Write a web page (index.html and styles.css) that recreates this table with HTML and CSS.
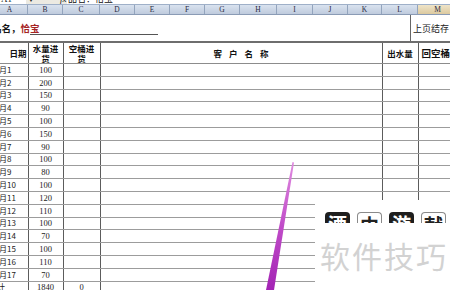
FILE: index.html
```html
<!DOCTYPE html>
<html lang="zh">
<head>
<meta charset="utf-8">
<title>水量登记表</title>
<link rel="stylesheet" href="styles.css">
</head>
<body>
<div class="screen">
  <div class="fbar">
    <span class="namebox">A1</span>
    <span class="arrow">▼</span>
    <span class="fx">fx</span>
    <span class="ftext">品名：恰宝</span>
  </div>
  <div class="colhead">
    <span>A</span><span>B</span><span>C</span><span>D</span><span>E</span><span>F</span><span>G</span><span>H</span><span>I</span><span>J</span><span>K</span><span>L</span><span class="sel">M</span>
  </div>
  <div class="row1">
    <div class="title"><span class="lbl">品名，</span><span class="val">恰宝</span><span class="line"></span></div>
    <div class="carry">上页结存</div>
  </div>
  <table class="sheet">
    <colgroup>
      <col class="c-a"><col class="c-b"><col class="c-c"><col class="c-d"><col class="c-l"><col class="c-m">
    </colgroup>
    <thead>
      <tr>
        <th class="date">日期</th>
        <th>水量进<br>货</th>
        <th>空桶进<br>货</th>
        <th class="cust">客户名称</th>
        <th>出水量</th>
        <th class="back">回空桶</th>
      </tr>
    </thead>
    <tbody>
      <tr><td class="m">月1</td><td>100</td><td></td><td></td><td></td><td></td></tr>
      <tr><td class="m">月2</td><td>200</td><td></td><td></td><td></td><td></td></tr>
      <tr><td class="m">月3</td><td>150</td><td></td><td></td><td></td><td></td></tr>
      <tr><td class="m">月4</td><td>90</td><td></td><td></td><td></td><td></td></tr>
      <tr><td class="m">月5</td><td>100</td><td></td><td></td><td></td><td></td></tr>
      <tr><td class="m">月6</td><td>150</td><td></td><td></td><td></td><td></td></tr>
      <tr><td class="m">月7</td><td>90</td><td></td><td></td><td></td><td></td></tr>
      <tr><td class="m">月8</td><td>100</td><td></td><td></td><td></td><td></td></tr>
      <tr><td class="m">月9</td><td>80</td><td></td><td></td><td></td><td></td></tr>
      <tr><td class="m">月10</td><td>100</td><td></td><td></td><td></td><td></td></tr>
      <tr><td class="m">月11</td><td>120</td><td></td><td></td><td></td><td></td></tr>
      <tr><td class="m">月12</td><td>110</td><td></td><td></td><td></td><td></td></tr>
      <tr><td class="m">月13</td><td>100</td><td></td><td></td><td></td><td></td></tr>
      <tr><td class="m">月14</td><td>70</td><td></td><td></td><td></td><td></td></tr>
      <tr><td class="m">月15</td><td>100</td><td></td><td></td><td></td><td></td></tr>
      <tr><td class="m">月16</td><td>110</td><td></td><td></td><td></td><td></td></tr>
      <tr><td class="m">月17</td><td>70</td><td></td><td></td><td></td><td></td></tr>
      <tr><td class="m total">计</td><td>1840</td><td>0</td><td></td><td></td><td></td></tr>
    </tbody>
  </table>

  <div class="mark">
    <div class="icons">
      <span class="ic dark"><span class="ch">酒</span></span><span class="ic light"><span class="ch">中</span></span><span class="ic dark"><span class="ch">游</span></span><span class="ic light"><span class="ch">献</span></span>
    </div>
    <div class="wm">软件技巧</div>
  </div>

  <svg class="pen" width="450" height="290" viewBox="0 0 450 290">
    <defs>
      <linearGradient id="pg" x1="0" y1="0" x2="0" y2="1">
        <stop offset="0" stop-color="#e08ae0"/>
        <stop offset="0.5" stop-color="#c04cc8"/>
        <stop offset="1" stop-color="#a324b4"/>
      </linearGradient>
    </defs>
    <polygon points="292.5,162 294,162.5 274,290 266,290" fill="url(#pg)"/>
  </svg>
</div>
</body>
</html>
```

FILE: styles.css
```css
* { box-sizing: border-box; }

html, body {
  margin: 0;
  padding: 0;
  background: #ffffff;
}

.screen {
  position: relative;
  width: 450px;
  height: 290px;
  overflow: hidden;
  font-family: "Noto Sans CJK SC", "Liberation Serif", sans-serif;
  color: #111;
}

/* formula bar remnant */
.fbar {
  display: flex;
  align-items: flex-end;
  height: 4px;
  overflow: hidden;
  background: #eceae2;
  font-size: 9px;
  line-height: 10px;
}
.fbar .namebox {
  width: 26px;
  background: #ffffff;
  padding-left: 1px;
  font-family: "Liberation Serif", serif;
}
.fbar .arrow {
  width: 34px;
  font-size: 6px;
  padding-left: 2px;
  color: #333;
}
.fbar .fx {
  width: 7px;
  font-family: "Liberation Serif", serif;
  font-style: italic;
}
.fbar .ftext {
  flex: 1;
  background: #ffffff;
  padding-left: 1px;
}

/* column letters */
.colhead {
  display: grid;
  grid-template-columns: 36px 35px 37px 35px 35px 35px 35px 37px 36px 35px 34px 36px 40px;
  margin-left: -8px;
  height: 11px;
  background: linear-gradient(#d9e2ef, #bfcbdd);
  border-top: 1px solid #9fb0c8;
  border-bottom: 1px solid #8a9bb5;
}
.colhead span {
  display: flex;
  align-items: center;
  justify-content: center;
  border-right: 1px solid #93a4bd;
  font-family: "Liberation Serif", serif;
  font-size: 7.5px;
  line-height: 9px;
  color: #2a2a40;
}
.colhead .sel {
  background: linear-gradient(#efe4c8, #dccaa0);
}

/* row 1 */
.row1 {
  display: flex;
  height: 26px;
}
.title {
  width: 418px;
  display: flex;
  align-items: center;
  margin-left: -8px;
  font-size: 9.5px;
  font-weight: bold;
  position: relative;
}
.title .lbl { color: #151515; }
.title .val { color: #a52424; }
.title .line {
  position: absolute;
  left: 38px;
  top: 19px;
  width: 128px;
  border-top: 1px solid #555;
}
.carry {
  flex: 1;
  border-left: 1px solid #666;
  display: flex;
  align-items: center;
  padding-left: 2px;
  font-size: 9px;
  white-space: nowrap;
  overflow: hidden;
  color: #222;
}

/* sheet */
.sheet {
  border-collapse: collapse;
  table-layout: fixed;
  width: 466px;
  margin-left: -8px;
}
.c-a { width: 36px; }
.c-b { width: 35px; }
.c-c { width: 37px; }
.c-d { width: 282px; }
.c-l { width: 36px; }
.c-m { width: 40px; }

.sheet th,
.sheet td {
  padding: 0;
  border-right: 1px solid #5c5c5c;
  border-bottom: 1px solid #9c9c9c;
  text-align: center;
  white-space: nowrap;
  overflow: hidden;
}
.sheet thead th {
  height: 20px;
  border-top: 2px solid #6e6e6e;
  border-bottom: 1px solid #8c8c8c;
  font-size: 8.5px;
  line-height: 10px;
  font-weight: bold;
  color: #111;
}
.sheet th.date {
  text-align: right;
  padding-right: 1px;
}
.sheet th.cust {
  letter-spacing: 7px;
  padding-left: 7px;
}
.sheet th.back {
  text-align: left;
  padding-left: 3px;
  font-size: 9.5px;
}
.sheet td {
  height: 12.8px;
  font-family: "Liberation Serif", "Noto Sans CJK SC", serif;
  font-size: 8.5px;
  line-height: 10px;
  color: #1a1a1a;
}
.sheet td.m {
  text-align: left;
  padding-left: 7px;
  font-family: "Noto Sans CJK SC", sans-serif;
  font-size: 8px;
}
.sheet td.total {
  padding-left: 5px;
}

/* watermark overlay */
.mark {
  position: absolute;
  left: 315px;
  top: 200px;
  width: 135px;
  height: 90px;
  background: #ffffff;
}
.icons {
  display: flex;
  gap: 7px;
  margin: 12px 0 0 10px;
  height: 11px;
  overflow: hidden;
  align-items: flex-start;
}
.ic {
  width: 25px;
  height: 11px;
  flex: none;
  overflow: hidden;
  border-radius: 4px 4px 0 0;
  display: flex;
  justify-content: center;
  align-items: flex-start;
}
.ic .ch {
  display: block;
  margin-top: 2px;
  font-size: 19px;
  line-height: 19px;
  height: 9px;
  font-weight: bold;
}
.ic.dark {
  background: #1e1e1e;
  color: #ffffff;
}
.ic.light {
  background: #ffffff;
  border: 1px solid #8a8a8a;
  border-bottom: none;
  color: #222;
}
.wm {
  margin: 16px 0 0 5px;
  font-size: 30px;
  line-height: 32px;
  letter-spacing: 2px;
  color: #d2d2d2;
  white-space: nowrap;
}

.pen {
  position: absolute;
  left: 0;
  top: 0;
  pointer-events: none;
}
```
